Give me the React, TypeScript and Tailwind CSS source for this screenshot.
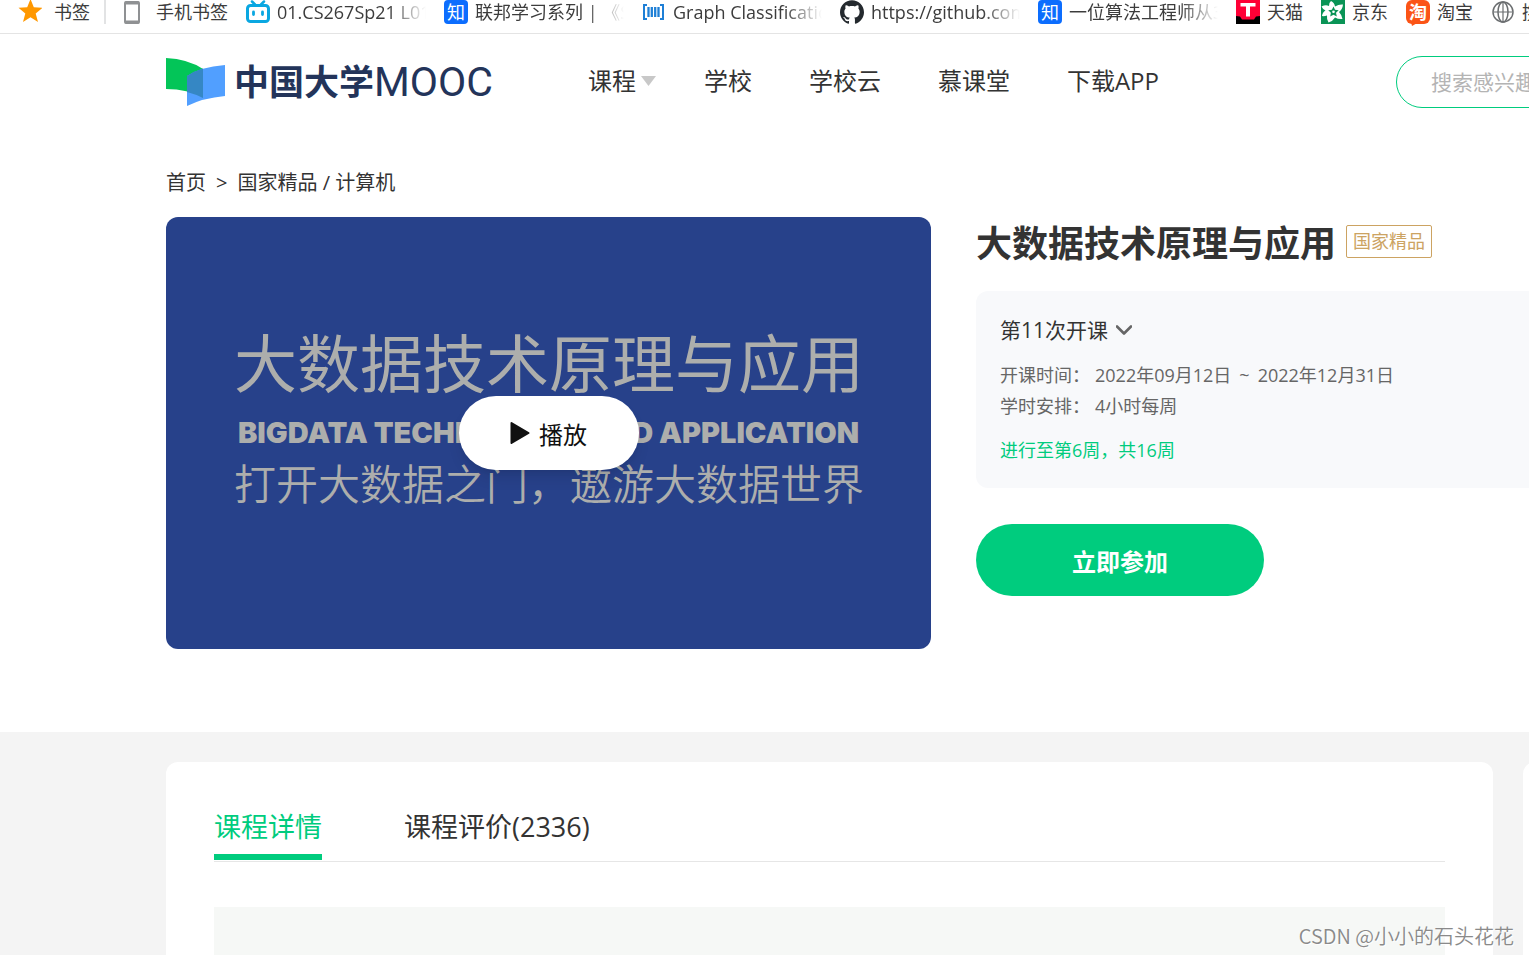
import type { ReactNode } from 'react';
import clsx from 'clsx';
import { SiGithub } from 'react-icons/si';

type Bookmark = {
  label: string;
  icon: ReactNode;
  clipped?: boolean;
};

function BilibiliIcon() {
  return (
    <svg className="size-6" viewBox="0 0 24 24" fill="none" stroke="#0aa7e1" strokeLinecap="round">
      <rect x="1.500" y="5.500" width="21" height="16" rx="3" strokeWidth="3" />
      <path d="M6 1.500l3 3M18 1.500l-3 3" strokeWidth="2.500" />
      <path d="M7.500 12v2.500M16.500 12v2.500" strokeWidth="2.800" />
    </svg>
  );
}

function ZhihuIcon() {
  return (
    <span className="flex size-6 items-center justify-center rounded bg-[#0c6dfe] text-[18px] leading-6 text-white">
      知
    </span>
  );
}

function BarcodeIcon() {
  return (
    <svg className="size-6" viewBox="0 0 24 24" fill="none" stroke="#1e7fd6">
      <path d="M5 5H2v14h3M18 5h3v14h-3" strokeWidth="2" />
      <path d="M6.500 7v10M9.800 7v10M13.200 7v10M16.500 7v10" strokeWidth="2.300" />
    </svg>
  );
}

function TmallIcon() {
  return (
    <svg className="size-6" viewBox="0 0 24 24">
      <path d="M0 0h24v24H0z" fill="#000" />
      <path d="M0 0h24v16l-4 .5-2 3H6l-2-3L0 16z" fill="#ff0036" />
      <path d="M4.500 3h15v3.500h-5.500v10h-4v-10H4.500z" fill="#fff" />
    </svg>
  );
}

function JdIcon() {
  return (
    <svg className="size-6" viewBox="0 0 24 24">
      <path d="M0 0h24v24H0z" fill="#0a9456" />
      <path
        d="M10 1q3.500 1.500 4 5.500 4-2.500 8-2-.5 5-4 7.500 3 3 3.500 7-4 .5-7.500-1.500-2 3.500-6.500 5-2-3-1.500-7-3 1-5 .5.500-4 3.500-5.500-3-1.500-4-4 4-2 7.500-.5-.5-3 2-5z"
        fill="#fff"
      />
      <path
        d="M12.500 6.500l1.500 3.300 3.700.4-2.700 2.600.8 3.700-3.300-1.800-3.300 1.800.7-3.700-2.700-2.600 3.700-.4z"
        fill="#0a9456"
      />
      <circle cx="12.500" cy="11.800" r="1.300" fill="#fff" />
    </svg>
  );
}

function TaobaoIcon() {
  return (
    <span className="relative flex size-6 items-center justify-center rounded-md bg-[#fb5416] text-[18px] leading-6 font-bold text-white">
      淘
      <svg className="absolute top-[22px] left-1" width="9" height="5" viewBox="0 0 9 5">
        <path d="M1 0h8L2 4z" fill="#fb5416" />
      </svg>
    </span>
  );
}

function GlobeIcon() {
  return (
    <svg className="size-6" viewBox="0 0 24 24" fill="none" stroke="#6b6e70" strokeWidth="1.500">
      <circle cx="12" cy="12" r="10" />
      <ellipse cx="12" cy="12" rx="5" ry="10" />
      <path d="M12 2v20M2.500 12h19" strokeWidth="1.200" />
    </svg>
  );
}

const BOOKMARKS: Bookmark[] = [
  { label: '01.CS267Sp21 L01', icon: <BilibiliIcon />, clipped: true },
  { label: '联邦学习系列 | 《Sha', icon: <ZhihuIcon />, clipped: true },
  { label: 'Graph Classification', icon: <BarcodeIcon />, clipped: true },
  { label: 'https://github.com/', icon: <SiGithub className="size-6 text-[#24292e]" />, clipped: true },
  { label: '一位算法工程师从3', icon: <ZhihuIcon />, clipped: true },
  { label: '天猫', icon: <TmallIcon /> },
  { label: '京东', icon: <JdIcon /> },
  { label: '淘宝', icon: <TaobaoIcon /> },
  { label: '携程', icon: <GlobeIcon /> },
];

const NAV = ['学校', '学校云', '慕课堂', '下载APP'];

function BookmarkBar() {
  return (
    <nav className="flex h-[34px] gap-[18px] border-b border-[#e4e4e4] pl-[18px] text-[18px] leading-6 whitespace-nowrap text-[#3c3c3c]">
      <div className="flex shrink-0 gap-[14px]">
        <a href="#" className="flex h-6 gap-3">
          <svg className="size-6" viewBox="0 0 24 24" fill="#ff9800">
            <path d="M12.500-1l3.300 8.300 8.700.5-6.800 5.600 2.300 8.600-7.500-4.800L5 22l2.300-8.600L.5 7.800l8.700-.5z" />
          </svg>
          书签
        </a>
        <span className="h-6 w-[2px] bg-[#e2e3e4]" />
        <a href="#" className="flex h-6 gap-3">
          <svg className="size-6" viewBox="0 0 24 24" fill="none" stroke="#8f9193">
            <rect x="5" y="2" width="14" height="21" rx="1" strokeWidth="2" />
            <path d="M5 3h14M5 22h14" strokeWidth="3" />
          </svg>
          手机书签
        </a>
      </div>
      {BOOKMARKS.map((item) => (
        <a key={item.label} href="#" className="flex h-6 shrink-0 gap-[7px]">
          <span className="size-6 shrink-0">{item.icon}</span>
          <span
            className={clsx(
              item.clipped &&
                'w-[149px] overflow-hidden [mask-image:linear-gradient(to_right,#000_75%,transparent)]',
            )}
          >
            {item.label}
          </span>
        </a>
      ))}
    </nav>
  );
}

function Logo() {
  return (
    <a href="#" className="flex items-center text-[#23345a]">
      <svg width="60" height="48" viewBox="0 0 60 48">
        <path d="M0 0q22 1 37 11v29Q22 31 0 31z" fill="#03c558" />
        <path d="M21 18Q34 9 59 7v31q-22 2-38 10z" fill="#519fff" />
        <path d="M21 18q7-5 16-7.500V40q-8-4-16-6z" fill="#3587c4" />
      </svg>
      <span className="ml-2 text-[35px] leading-[48px] font-bold">中国大学</span>
      <span className="font-[Roboto] text-[41px] leading-[48px]">MOOC</span>
    </a>
  );
}

function Header() {
  return (
    <header className="flex h-24 items-center pl-[166px] text-[#333]">
      <Logo />
      <nav className="ml-[95px] flex gap-[57px] pb-[3px] text-[24px] leading-8 whitespace-nowrap">
        <a href="#" className="flex items-center gap-[5px]">
          课程
          <svg className="-mr-[9px]" width="15" height="10" viewBox="0 0 15 10" fill="#c8c8c8">
            <path d="M0 0h15L7.500 10z" />
          </svg>
        </a>
        {NAV.map((label) => (
          <a key={label} href="#">
            {label}
          </a>
        ))}
      </nav>
      <input
        type="search"
        aria-label="搜索课程"
        placeholder="搜索感兴趣的课程"
        className="-mr-[227px] ml-auto h-[52px] w-[360px] shrink-0 rounded-full border border-[#00cc7e] px-[34px] text-[21px] placeholder:text-[#b4b4b4]"
      />
    </header>
  );
}

function Poster() {
  return (
    <div className="relative flex h-[432px] w-[765px] shrink-0 flex-col overflow-hidden rounded-xl bg-[#27418a] pt-[106px] pl-[68px] whitespace-nowrap text-[#adaeac]">
      <p className="text-[63px] leading-[80px]">大数据技术原理与应用</p>
      <p className="mt-3 ml-1 font-[Inter] text-[29px] leading-9 font-black">
        BIGDATA TECHNOLOGY AND APPLICATION
      </p>
      <p className="mt-2 text-[42px] leading-[50px] font-[350]">打开大数据之门，遨游大数据世界</p>
      <button
        type="button"
        className="absolute inset-0 m-auto flex h-[74px] w-[180px] items-center justify-center gap-[9px] rounded-full bg-white text-[24px] text-[#111] shadow-lg"
      >
        <svg width="20" height="24" viewBox="0 0 20 24">
          <path d="M1.500 2l17 10-17 10z" fill="#111" stroke="#111" strokeWidth="2" strokeLinejoin="round" />
        </svg>
        <span className="pt-1">播放</span>
      </button>
    </div>
  );
}

function CourseInfo() {
  return (
    <div className="min-w-0 flex-1">
      <div className="flex items-start gap-[10px] pt-2 whitespace-nowrap">
        <h1 className="text-[36px] leading-[38px] font-bold text-[#333]">大数据技术原理与应用</h1>
        <span className="rounded-xs border border-[#cca362] px-[6px] text-[18px] leading-[31px] text-[#cca362]">
          国家精品
        </span>
      </div>
      <div className="mt-7 rounded-l-xl bg-[#f8f9fb] px-6 pt-[23px] pb-[22px] text-[18px] leading-[31px] text-[#666]">
        <button type="button" className="flex items-center gap-2 text-[21px] leading-8 text-[#333]">
          第11次开课
          <svg width="16" height="11" viewBox="0 0 16 11" fill="none" stroke="#666" strokeWidth="2.600">
            <path d="M1 1.500l7 7 7-7" strokeLinecap="round" strokeLinejoin="round" />
          </svg>
        </button>
        <dl className="mt-[14px] grid grid-cols-[auto_1fr] gap-x-[5px]">
          <dt>开课时间：</dt>
          <dd className="flex gap-2">
            <time dateTime="2022-09-12">2022年09月12日</time>
            <span>~</span>
            <time dateTime="2022-12-31">2022年12月31日</time>
          </dd>
          <dt>学时安排：</dt>
          <dd>4小时每周</dd>
        </dl>
        <p className="mt-[13px] text-[#00cc7e]">进行至第6周，共16周</p>
      </div>
      <button
        type="button"
        className="mt-9 h-[72px] w-72 rounded-full bg-[#00cc7e] pt-1 text-[24px] font-bold text-white"
      >
        立即参加
      </button>
    </div>
  );
}

function Details() {
  return (
    <section className="flex flex-1 gap-[30px] bg-[#f4f4f4] pt-[30px] pl-[166px]">
      <div className="flex min-w-0 flex-1 flex-col rounded-t-xl bg-white px-12 pt-[43px]">
        <div className="flex gap-[82px] border-b border-[#e6e6e6] pb-[1px] text-[27px] leading-[44px] text-[#333]">
          <button type="button" className="border-b-[6px] border-[#00cc7e] pb-[5px] text-[#00cc7e]">
            课程详情
          </button>
          <button type="button" className="border-b-[6px] border-transparent pb-[5px]">
            课程评价(2336)
          </button>
        </div>
        <div className="mt-[45px] min-h-12 flex-1 bg-[#f6f8f6]" />
      </div>
      <aside className="-mr-[324px] w-[330px] shrink-0 rounded-t-xl bg-white" />
    </section>
  );
}

export default function App() {
  return (
    <div className="relative flex min-h-screen flex-col overflow-hidden bg-white font-['Open_Sans','Noto_Sans_CJK_SC',sans-serif]">
      <BookmarkBar />
      <Header />
      <main className="flex flex-1 flex-col">
        <div className="pt-[39px] pb-[83px] pl-[166px]">
          <div className="flex gap-[10px] text-[20px] leading-7 text-[#333]">
            <a href="#">首页</a>
            <span>&gt;</span>
            <a href="#">国家精品 / 计算机</a>
          </div>
          <div className="mt-5 flex gap-[45px]">
            <Poster />
            <CourseInfo />
          </div>
        </div>
        <Details />
      </main>
      <p className="absolute right-[15px] bottom-[5px] font-['Noto_Sans_CJK_SC',sans-serif] text-[20px] leading-7 font-[350] text-[#8a8a8a] [text-shadow:1px_1px_1px_#fff]">
        CSDN @小小的石头花花
      </p>
    </div>
  );
}
